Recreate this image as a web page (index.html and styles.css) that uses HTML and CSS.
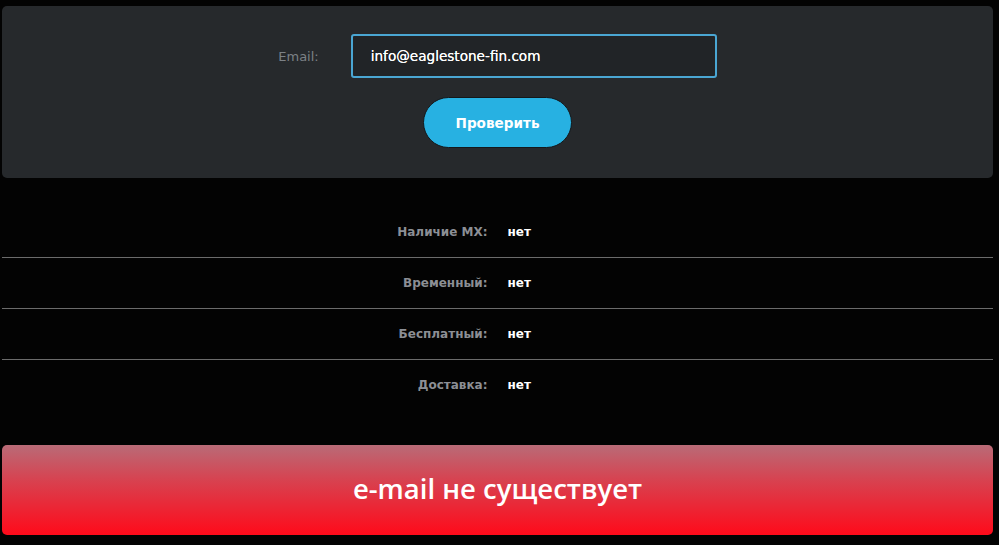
FILE: index.html
```html
<!DOCTYPE html>
<html lang="ru">
<head>
<meta charset="utf-8">
<title>Проверка e-mail</title>
<link rel="stylesheet" href="styles.css">
</head>
<body>
<div class="page">
  <form class="panel">
    <div class="field">
      <label class="field-label" for="email">Email:</label>
      <input class="field-input" id="email" type="text" value="info@eaglestone-fin.com">
    </div>
    <button class="check-btn" type="button">Проверить</button>
  </form>
  <div class="results">
    <div class="row"><span class="row-label">Наличие MX:</span><span class="row-value">нет</span></div>
    <div class="row"><span class="row-label">Временный:</span><span class="row-value">нет</span></div>
    <div class="row"><span class="row-label">Бесплатный:</span><span class="row-value">нет</span></div>
    <div class="row"><span class="row-label">Доставка:</span><span class="row-value">нет</span></div>
  </div>
  <div class="verdict">e-mail не существует</div>
</div>
</body>
</html>
```
FILE: styles.css
```css
html, body {
  margin: 0;
  padding: 0;
  background: #030303;
  font-family: "DejaVu Sans", "Open Sans", sans-serif;
}
.page {
  padding: 6px 6px 0 2px;
  display: flex;
  flex-direction: column;
}
.panel {
  background: #26292c;
  border-radius: 5px;
  padding: 28px 0 30px;
  display: flex;
  flex-direction: column;
  align-items: center;
  gap: 19px;
}
.field {
  display: flex;
  align-items: center;
  gap: 32px;
}
.field-label {
  color: #7c8186;
  font-size: 13px;
  font-weight: 500;
}
.field-input {
  box-sizing: border-box;
  width: 366px;
  height: 44px;
  border: 2px solid #4aa6d3;
  border-radius: 3px;
  background: #212427;
  color: #ffffff;
  font-family: inherit;
  font-size: 13.6px;
  padding: 0 18px;
  outline: none;
  text-shadow: 0 0 0.4px #ffffff;
}
.check-btn {
  box-sizing: border-box;
  width: 149px;
  height: 51px;
  border-radius: 26px;
  border: 1px solid #14181b;
  background: #27b1e2;
  color: #ffffff;
  font-family: inherit;
  font-size: 13.6px;
  font-weight: bold;
  cursor: pointer;
}
.results {
  margin-top: 29px;
  display: flex;
  flex-direction: column;
}
.row {
  display: grid;
  grid-template-columns: 1fr 1fr;
  column-gap: 20px;
  align-items: center;
  height: 50px;
  border-bottom: 1px solid #6b6b6b;
  font-size: 12px;
  font-weight: bold;
}
.row:last-child {
  border-bottom: none;
}
.row-label {
  text-align: right;
  color: #8c8f95;
}
.row-value {
  color: #ffffff;
}
.verdict {
  margin-top: 35px;
  height: 90px;
  border-radius: 5px;
  background: linear-gradient(to bottom, #b96b77 0%, #d8414f 40%, #ff0a1a 100%);
  display: flex;
  align-items: center;
  justify-content: center;
  color: #ffffff;
  font-family: "Open Sans", sans-serif;
  font-size: 27.5px;
  font-weight: 600;
  padding-bottom: 4px;
  box-sizing: border-box;
}
```
